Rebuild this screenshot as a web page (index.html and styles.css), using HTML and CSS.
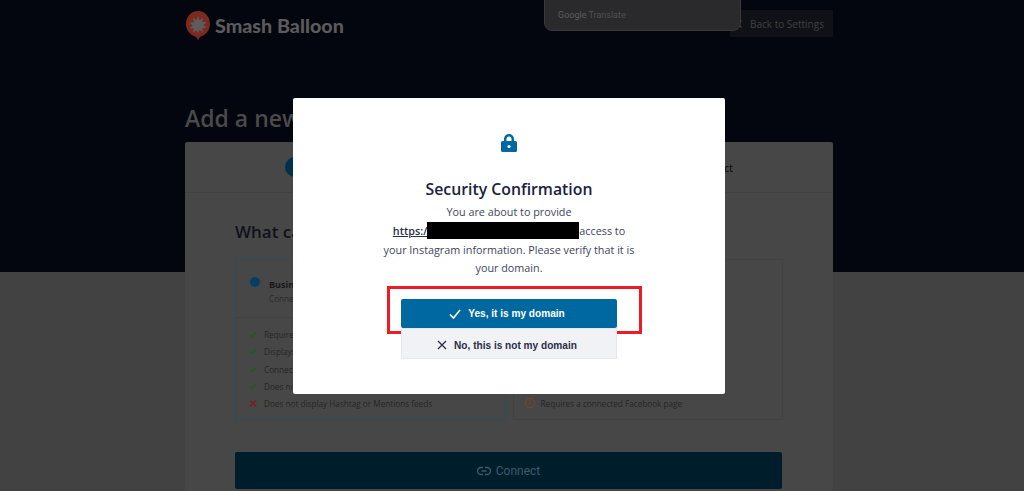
FILE: index.html
```html
<!DOCTYPE html>
<html lang="en">
<head>
    <meta charset="UTF-8">
    <title>Security Confirmation</title>
    <link rel="stylesheet" href="styles.css">
</head>
<body>
    <div class="page-top">
        <div class="wrap">
            <div class="header">
                <div class="logo">
                    <svg width="26" height="32" viewBox="0 0 26 32">
                        <path d="M13 1C6 1 1 7 1 14c0 6 4 11 10 13l2 3 2-3c6-2 10-7 10-13C25 7 20 1 13 1z" fill="#7c2a20"/>
                        <path d="M13 6l1.600 4.200L18 7.600l-.8 4.200 4.300.4-3.200 2.800 3.200 2.800-4.300.4.8 4.200-3.400-2.600L13 24l-1.600-3.800L8 22.800l.8-4.200-4.300-.4 3.200-2.800-3.200-2.800 4.300-.4L8 7.600l3.400 2.600z" fill="#5c5c5c"/>
                    </svg>
                    <span class="logo-text">Smash Balloon</span>
                </div>
                <a class="back-btn">
                    <svg width="5" height="8" viewBox="0 0 5 8" fill="none" stroke="#3f4044" stroke-width="1.200"><path d="M4.500.5L1 4l3.500 3.500"/></svg>
                    Back to Settings
                </a>
            </div>
            <h1>Add a new</h1>
        </div>
    </div>

    <div class="wrap">
        <div class="card">
            <div class="steps">
                <span class="step-dot"></span>
                <span class="step-last">Connect</span>
            </div>
            <div class="card-body">
                <h2>What can I do</h2>
                <div class="options">
                    <div class="option selected">
                        <div class="option-head">
                            <span class="radio"></span>
                            <div class="option-text">
                                <div class="option-title">Business</div>
                                <div class="option-sub">Connect</div>
                            </div>
                        </div>
                        <ul class="option-list">
                            <li><svg width="8" height="7" viewBox="0 0 8 7" fill="none" stroke="#1f5a2b" stroke-width="1.500"><path d="M.5 3.500l2.200 2.200L7.500.8"/></svg>Requires</li>
                            <li><svg width="8" height="7" viewBox="0 0 8 7" fill="none" stroke="#1f5a2b" stroke-width="1.500"><path d="M.5 3.500l2.200 2.200L7.500.8"/></svg>Displays</li>
                            <li><svg width="8" height="7" viewBox="0 0 8 7" fill="none" stroke="#1f5a2b" stroke-width="1.500"><path d="M.5 3.500l2.200 2.200L7.500.8"/></svg>Connect</li>
                            <li><svg width="8" height="7" viewBox="0 0 8 7" fill="none" stroke="#1f5a2b" stroke-width="1.500"><path d="M.5 3.500l2.200 2.200L7.500.8"/></svg>Does not</li>
                            <li><svg width="8" height="7" viewBox="0 0 8 7" fill="none" stroke="#7a2018" stroke-width="1.500"><path d="M1 .5l6 6M7 .5l-6 6"/></svg>Does not display Hashtag or Mentions feeds</li>
                        </ul>
                    </div>
                    <div class="option">
                        <ul class="option-list end">
                            <li><span class="warn">!</span>Requires a connected Facebook page</li>
                        </ul>
                    </div>
                </div>
                <button class="connect-btn">
                    <svg width="14" height="10" viewBox="0 0 14 10" fill="none" stroke="#3f5a68" stroke-width="1.300">
                        <path d="M6 1.500H4a3.500 3.500 0 0 0 0 7h2M8 1.500h2a3.500 3.500 0 0 1 0 7H8M4.500 5h5"/>
                    </svg>
                    Connect
                </button>
            </div>
        </div>
    </div>

    <div class="translate-bar">Google <span>Translate</span></div>

    <div class="modal">
        <svg class="lock" width="16" height="18" viewBox="0 0 16 18">
            <path d="M3 7V5a5 5 0 0 1 10 0v2h1.500A1.500 1.500 0 0 1 16 8.500v8a1.500 1.500 0 0 1-1.500 1.500h-13A1.500 1.500 0 0 1 0 16.500v-8A1.500 1.500 0 0 1 1.500 7zm2.500 0h5V5a2.500 2.500 0 0 0-5 0z" fill="#0068a0"/>
            <circle cx="8" cy="12.500" r="1.600" fill="#fff"/>
        </svg>
        <h3>Security Confirmation</h3>
        <p>You are about to provide<br><a class="site">https:/<span class="redact"></span></a>access to<br>your Instagram information. Please verify that it is<br>your domain.</p>
        <div class="actions">
            <div class="highlight"></div>
            <button class="btn-yes">
                <svg width="12" height="10" viewBox="0 0 12 10" fill="none" stroke="#fff" stroke-width="1.600"><path d="M1 5.500l3.500 3.500L11 1"/></svg>
                Yes, it is my domain
            </button>
            <button class="btn-no">
                <svg width="10" height="10" viewBox="0 0 10 10" fill="none" stroke="#2a2f45" stroke-width="1.300"><path d="M1 1l8 8M9 1L1 9"/></svg>
                No, this is not my domain
            </button>
        </div>
    </div>
</body>
</html>
```

FILE: styles.css
```css
* {
    box-sizing: border-box;
}
html, body {
    height: 491px;
    overflow: hidden;
}
body {
    margin: 0;
    background-color: #424242;
    font-family: "Open Sans", sans-serif;
    color: #1b1b1b;
}
.page-top {
    height: 272px;
    background-color: #03050f;
}
.wrap {
    width: 648px;
    margin-left: 185px;
}
.header {
    height: 48px;
    padding-top: 10px;
    display: flex;
    justify-content: space-between;
    align-items: flex-start;
}
.logo {
    display: flex;
    align-items: center;
    gap: 4px;
    color: #5a5a5a;
    font-family: Lato, sans-serif;
    font-weight: 900;
    font-size: 19.700px;
}
.logo-text {
    margin-top: -2px;
}
.back-btn {
    width: 103px;
    height: 27px;
    padding: 0 0 0 7px;
    display: flex;
    align-items: center;
    gap: 8px;
    background-color: #101116;
    color: #3f4044;
    font-size: 10px;
}
h1 {
    margin: 0;
    padding-top: 55px;
    color: #4a4a4a;
    font-size: 23px;
    font-weight: 600;
    line-height: 30px;
}
.card {
    margin-top: -130px;
    height: 359px;
    background-color: #474747;
    border-radius: 2px 2px 0 0;
}
.steps {
    height: 51px;
    padding: 2px 100px 0;
    display: flex;
    justify-content: space-between;
    align-items: center;
    border-bottom: 1px solid #424242;
    font-size: 10px;
    font-weight: 600;
    color: #161616;
}
.step-dot {
    width: 20px;
    height: 20px;
    margin-top: -2px;
    border-radius: 50%;
    background-color: #00304c;
}
.card-body {
    padding: 26px 50px 0;
}
h2 {
    margin: 0;
    font-size: 17px;
    font-weight: 600;
    line-height: 26px;
    color: #10121a;
}
.options {
    margin-top: 14px;
    display: flex;
    gap: 7px;
}
.option {
    flex: 1;
    height: 161px;
    border: 1px solid #424242;
    border-radius: 2px;
    display: flex;
    flex-direction: column;
    justify-content: flex-end;
}
.option.selected {
    border-color: #2c4d5c;
    justify-content: flex-start;
}
.option-head {
    height: 58px;
    padding: 17px 14px 0;
    display: flex;
    gap: 9px;
    border-bottom: 1px solid #424242;
}
.radio {
    width: 10px;
    height: 10px;
    border-radius: 50%;
    background-color: #0b3d63;
    box-shadow: 0 0 0 1px #3a4c5a;
}
.option-text {
    padding-top: 1px;
}
.option-title {
    font-size: 9px;
    font-weight: 700;
    line-height: 13px;
    color: #17171a;
}
.option-sub {
    font-size: 8.200px;
    line-height: 16px;
    color: #2a2a2a;
}
.option-list {
    margin: 0;
    padding: 8px 13px 0;
    list-style: none;
    font-size: 8.200px;
    color: #262626;
}
.option-list.end {
    padding: 0 11px 7px;
}
.option-list li {
    height: 17.300px;
    display: flex;
    align-items: center;
    gap: 7px;
}
.option-list.end li {
    gap: 6px;
}
.warn {
    width: 10px;
    height: 10px;
    border: 1px solid #7a4a18;
    border-radius: 50%;
    color: #7a4a18;
    font-size: 7px;
    line-height: 8px;
    text-align: center;
}
.connect-btn {
    width: 547px;
    height: 37px;
    margin-top: 32px;
    display: flex;
    align-items: center;
    justify-content: center;
    gap: 5px;
    border: none;
    border-radius: 2px;
    background-color: #001d2c;
    color: #3f5a68;
    font-family: Roboto, sans-serif;
    font-size: 12px;
}
.translate-bar {
    position: absolute;
    left: 544px;
    top: -1px;
    width: 197px;
    height: 32px;
    padding: 10px 0 0 13px;
    background-color: #2a2a2c;
    border: 1px solid #3a3a3c;
    border-radius: 0 0 8px 8px;
    color: #5c5c5c;
    font-family: Roboto, sans-serif;
    font-size: 9px;
}
.translate-bar span {
    color: #4f4f4f;
}
.modal {
    position: absolute;
    left: 293px;
    top: 98px;
    width: 432px;
    height: 296px;
    padding-top: 36px;
    background-color: #fff;
    border-radius: 2px;
    text-align: center;
}
.lock {
    display: block;
    margin: 0 auto;
}
h3 {
    margin: 26px 0 0;
    font-size: 15.800px;
    font-weight: 600;
    line-height: 22px;
    color: #1b2140;
}
.modal p {
    margin: 3px 0 0;
    font-size: 10.800px;
    line-height: 18.750px;
    color: #3f4460;
}
.site {
    font-weight: 600;
    text-decoration: underline;
    color: #2a2f45;
}
.redact {
    display: inline-block;
    width: 152px;
    height: 17px;
    vertical-align: -4px;
    background-color: #000;
}
.actions {
    position: relative;
    width: 216px;
    margin: 21px auto 0;
}
.highlight {
    position: absolute;
    left: -14px;
    top: -13px;
    width: 255px;
    height: 48px;
    border: 3px solid #ed1c24;
}
.btn-yes, .btn-no {
    position: relative;
    width: 216px;
    display: flex;
    align-items: center;
    justify-content: center;
    gap: 7px;
    border: none;
    font-family: "Liberation Sans", sans-serif;
    font-size: 10.100px;
    font-weight: 700;
}
.btn-yes {
    height: 29px;
    padding-right: 10px;
    background-color: #0068a0;
    border-radius: 2px;
    color: #fff;
}
.btn-no {
    height: 31px;
    padding: 3px 4px 0 0;
    background-color: #f1f2f5;
    border: 1px solid #e6e7ea;
    color: #2a2f45;
}
```
